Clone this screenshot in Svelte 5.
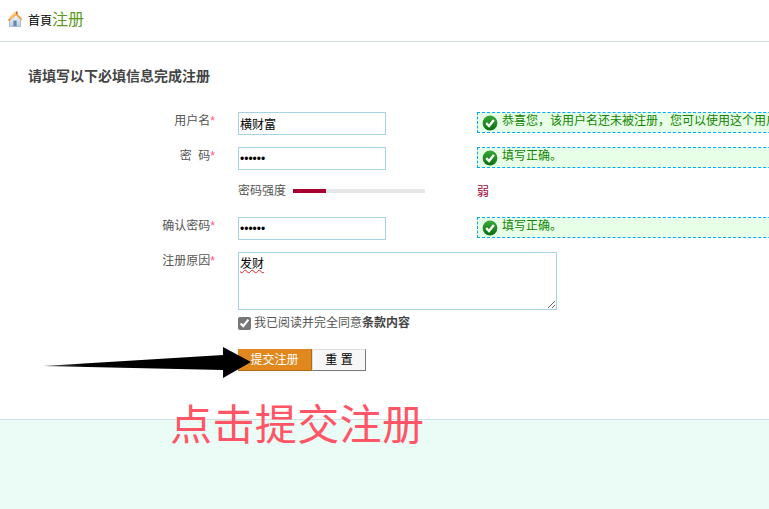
<script>
  const okText = '填写正确。';
</script>

{#snippet okIcon()}
  <svg class="ok" width="16" height="16" viewBox="0 0 16 16">
    <defs>
      <linearGradient id="okfill" x1="0" x2="0" y1="0" y2="1">
        <stop offset="0" stop-color="#3aa83a" />
        <stop offset="1" stop-color="#0b6e12" />
      </linearGradient>
    </defs>
    <circle cx="8" cy="8" r="7.4" fill="url(#okfill)" />
    <path d="M4.2 8.2 7 11 11.9 5" fill="none" stroke="#fff" stroke-width="2.4" />
  </svg>
{/snippet}

<div class="page">
  <header class="crumb">
    <svg class="home" width="16" height="16" viewBox="0 0 16 16">
      <defs>
        <linearGradient id="wall" x1="0" x2="0" y1="0" y2="1">
          <stop offset="0" stop-color="#f2f6fb" />
          <stop offset="1" stop-color="#b9cfe8" />
        </linearGradient>
      </defs>
      <path d="M2.5 8v7.4h11V8L9 3.5z" fill="url(#wall)" stroke="#8da6c4" stroke-width="0.7" />
      <path d="M0.6 9 8.6 1l6.6 7-1 1.2L9 4.2 2.2 10.2z" fill="#f0a040" />
      <path d="M3 5.4 8.6 0.6 10 2.2 3.4 8.4z" fill="#fbc46e" />
      <rect x="9" y="0.5" width="1.6" height="2.6" fill="#d8553a" />
      <rect x="6.4" y="9.6" width="3.2" height="5.6" fill="#6c84a8" />
    </svg>
    <span class="home-link">首頁</span><span class="crumb-title">注册</span>
  </header>

  <main class="content">
    <h2>请填写以下必填信息完成注册</h2>

    <div class="form">
      <div class="row">
        <label>用户名<i>*</i></label>
        <input class="field" value="横财富" />
        <div class="msg">
          {@render okIcon()}
          <span>恭喜您，该用户名还未被注册，您可以使用这个用户名注册！</span>
        </div>
      </div>

      <div class="row">
        <label>密&nbsp;&nbsp;码<i>*</i></label>
        <input class="field" type="password" value="123456" />
        <div class="msg">
          {@render okIcon()}
          <span>{okText}</span>
        </div>
      </div>

      <div class="row strength">
        <span></span>
        <div class="meter">
          <span class="meter-label">密码强度</span>
          <div class="bar"><div class="bar-fill"></div></div>
        </div>
        <span class="weak">弱</span>
      </div>

      <div class="row">
        <label>确认密码<i>*</i></label>
        <input class="field" type="password" value="123456" />
        <div class="msg">
          {@render okIcon()}
          <span>{okText}</span>
        </div>
      </div>

      <div class="row reason">
        <label>注册原因<i>*</i></label>
        <textarea class="area">发财</textarea>
      </div>

      <div class="agree">
        <input type="checkbox" checked />
        <span>我已阅读并完全同意<b>条款内容</b></span>
      </div>

      <div class="actions">
        <button class="submit">提交注册</button>
        <button class="reset">重 置</button>
        <svg class="arrow" width="210" height="38" viewBox="0 0 210 38">
          <defs>
            <linearGradient id="tail" x1="0" x2="1" y1="0" y2="0">
              <stop offset="0" stop-color="#000" stop-opacity="0.6" />
              <stop offset="0.2" stop-color="#000" />
            </linearGradient>
          </defs>
          <path d="M0 23 180 12V4L208 19 180 35V27Z" fill="url(#tail)" />
        </svg>
      </div>
    </div>
  </main>

  <footer class="foot">
    <div class="note">点击提交注册</div>
  </footer>
</div>

<style>
  :global(body) {
    margin: 0;
    background: #fff;
    overflow: hidden;
  }

  .page {
    position: relative;
    width: 769px;
    height: 509px;
    overflow: hidden;
    font-family: "Liberation Sans", "Noto Sans CJK SC", sans-serif;
    font-size: 12px;
    color: #555;
  }

  .crumb {
    display: flex;
    align-items: center;
    height: 42px;
    padding: 0 0 5px 7px;
    box-sizing: border-box;
    border-bottom: 1px solid #d3e1e6;
  }

  .home {
    margin-right: 5px;
    margin-top: 2px;
  }

  .home-link {
    color: #000;
    margin-top: 2px;
  }

  .crumb-title {
    color: #5c9a1f;
    font-size: 16px;
  }

  .content {
    padding: 0 0 0 28px;
    height: 377px;
    box-sizing: border-box;
  }

  h2 {
    margin: 0;
    padding-top: 26px;
    font-size: 14px;
    line-height: 16px;
    font-weight: bold;
    color: #444;
  }

  .form {
    margin-top: 28px;
    margin-left: -28px;
  }

  .row {
    display: grid;
    grid-template-columns: 215px 239px 320px;
    height: 35px;
  }

  .row > :nth-child(2),
  .row > :nth-child(3) {
    margin-left: 23px;
  }

  label {
    text-align: right;
    padding-top: 2px;
    line-height: 14px;
  }

  label i {
    color: #ff5577;
    font-style: normal;
  }

  .field {
    box-sizing: border-box;
    width: 148px;
    height: 23px;
    padding: 0 1px;
    border: 1px solid #a5d2e4;
    outline: none;
    font: 12px "Liberation Sans", "Noto Sans CJK SC", sans-serif;
    color: #000;
  }

  .msg {
    display: flex;
    align-items: center;
    gap: 4px;
    width: 460px;
    height: 21px;
    box-sizing: border-box;
    padding-left: 4px;
    border: 1px dashed #00aaff;
    background: #e6ffe6;
    color: #118400;
    white-space: nowrap;
  }

  .msg span {
    margin-top: -6px;
  }

  .meter {
    display: flex;
    align-items: center;
    gap: 7px;
    height: 14px;
  }

  .bar {
    width: 132px;
    height: 4px;
    margin-top: 4px;
    background: #e4e6e8;
  }

  .bar-fill {
    width: 33px;
    height: 100%;
    background: #a60030;
  }

  .weak {
    color: #a60030;
    line-height: 14px;
    margin-top: 3px;
  }

  .reason {
    height: 61px;
  }

  .area {
    box-sizing: border-box;
    width: 319px;
    height: 58px;
    padding: 1px;
    border: 1px solid #a5d2e4;
    outline: none;
    font: 12px "Liberation Sans", "Noto Sans CJK SC", sans-serif;
    color: #000;
    text-decoration: underline wavy #e02020 1px;
  }

  .agree {
    display: flex;
    align-items: center;
    gap: 3px;
    margin-left: 238px;
    height: 18px;
  }

  .agree span {
    margin-top: -1px;
  }

  .agree input {
    width: 13px;
    height: 13px;
    margin: 2px 0 0;
    accent-color: #777;
  }

  .agree b {
    font-weight: bold;
    color: #444;
  }

  .actions {
    position: relative;
    display: flex;
    margin: 18px 0 0 238px;
  }

  .submit,
  .reset {
    height: 22px;
    padding: 0 0 3px;
    box-sizing: border-box;
    font: 12px "Liberation Sans", "Noto Sans CJK SC", sans-serif;
    cursor: pointer;
  }

  .submit {
    width: 74px;
    border: 0;
    border-right: 1px solid #b06a10;
    border-bottom: 1px solid #b06a10;
    background: #e0881e;
    color: #fff;
  }

  .reset {
    width: 54px;
    border: 1px solid #ddd;
    border-right-color: #777;
    border-bottom-color: #777;
    background: #f7f7f7;
    color: #000;
  }

  /* pasted over the buttons in the original shot */
  .arrow {
    position: absolute;
    left: -195px;
    top: -6px;
  }

  .foot {
    height: 90px;
    border-top: 1px solid #cfe3e6;
    background: #ebfbf6;
  }

  .note {
    position: absolute;
    left: 170px;
    top: 401px;
    font-size: 42px;
    line-height: 50px;
    letter-spacing: 0.4px;
    color: #ff5566;
    white-space: nowrap;
  }
</style>
